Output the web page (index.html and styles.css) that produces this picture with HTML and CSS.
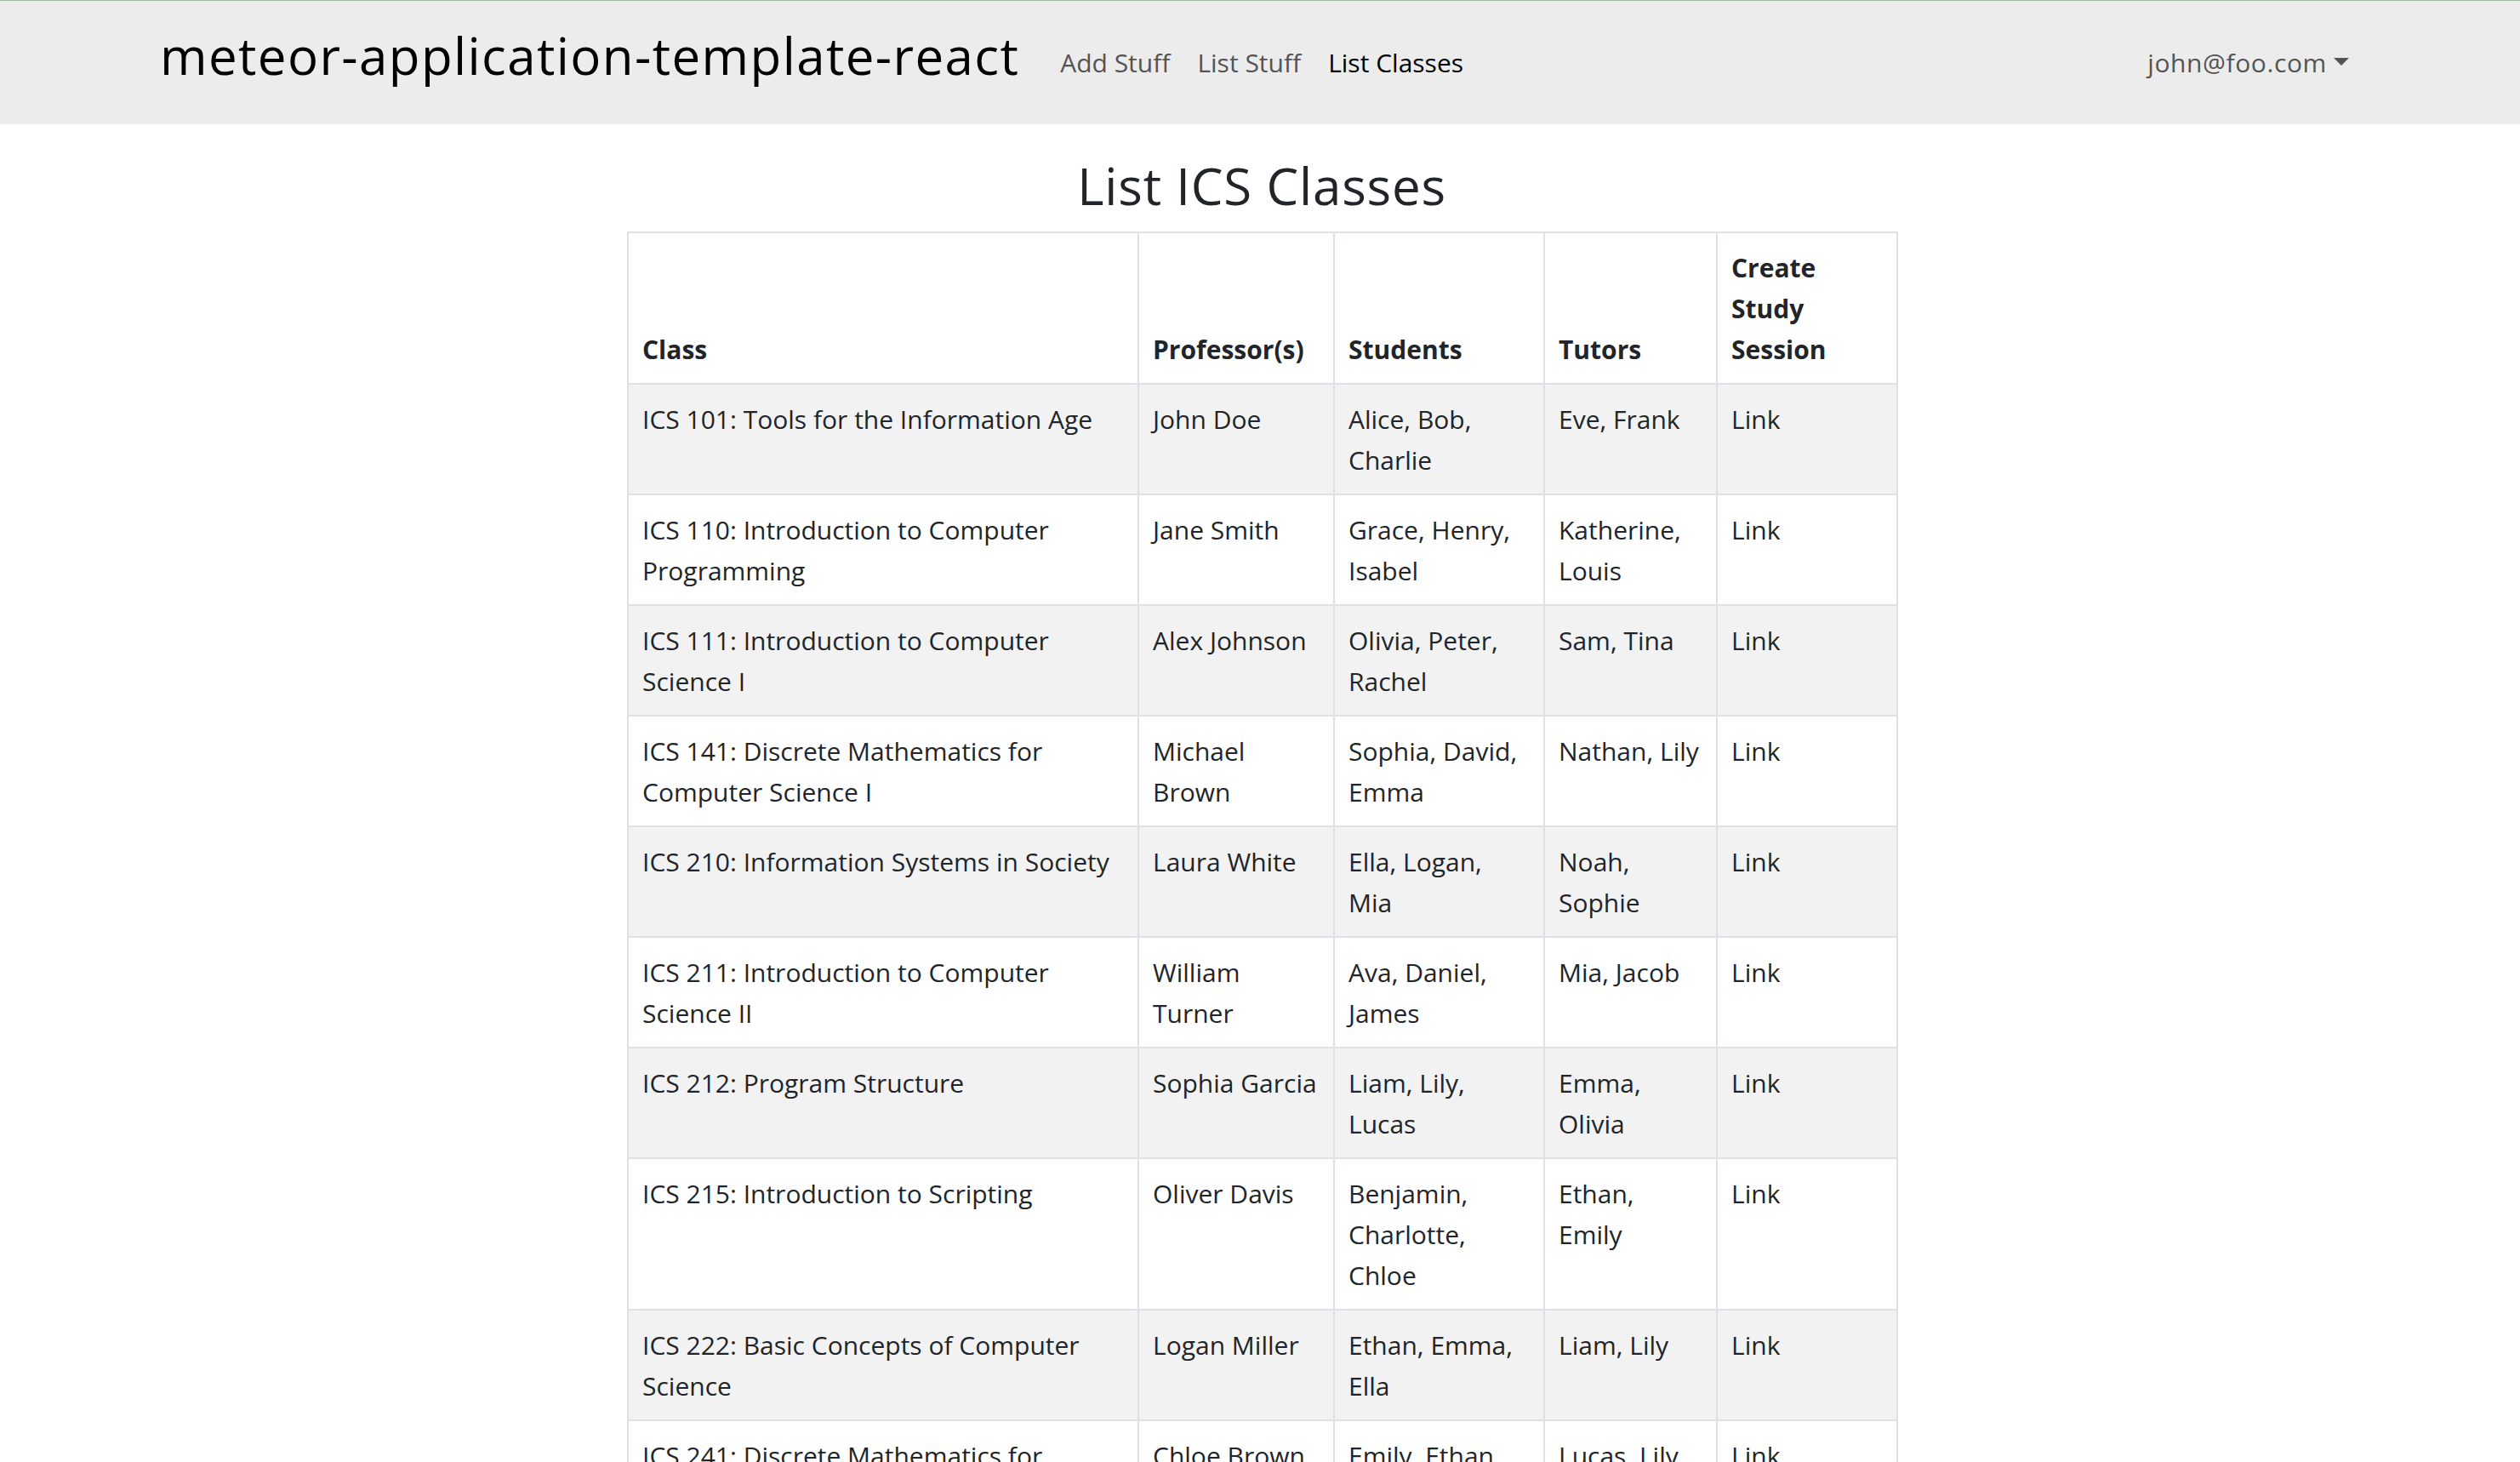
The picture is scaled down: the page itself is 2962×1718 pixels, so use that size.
FILE: index.html
```html
<!DOCTYPE html>
<html lang="en">
<head>
<meta charset="utf-8">
<title>List ICS Classes</title>
<link rel="stylesheet" href="styles.css">
</head>
<body>
<nav class="navbar">
  <div class="nav-container">
    <a class="brand" href="#"><h2 class="brand-title">meteor-application-template-react</h2></a>
    <div class="nav-links">
      <a class="nav-link" href="#">Add Stuff</a>
      <a class="nav-link" href="#">List Stuff</a>
      <a class="nav-link active" href="#">List Classes</a>
    </div>
    <div class="nav-right">
      <a class="nav-link user" href="#">john@foo.com<span class="caret"></span></a>
    </div>
  </div>
</nav>

<main class="page">
  <h2 class="page-title">List ICS Classes</h2>
  <table class="classes">
    <colgroup>
      <col class="c-class">
      <col class="c-prof">
      <col class="c-students">
      <col class="c-tutors">
      <col class="c-link">
    </colgroup>
    <thead>
      <tr>
        <th>Class</th>
        <th>Professor(s)</th>
        <th>Students</th>
        <th>Tutors</th>
        <th>Create Study Session</th>
      </tr>
    </thead>
    <tbody>
      <tr><td>ICS 101: Tools for the Information Age</td><td>John Doe</td><td>Alice, Bob, Charlie</td><td>Eve, Frank</td><td><a href="#">Link</a></td></tr>
      <tr><td>ICS 110: Introduction to Computer Programming</td><td>Jane Smith</td><td>Grace, Henry, Isabel</td><td>Katherine, Louis</td><td><a href="#">Link</a></td></tr>
      <tr><td>ICS 111: Introduction to Computer Science I</td><td>Alex Johnson</td><td>Olivia, Peter, Rachel</td><td>Sam, Tina</td><td><a href="#">Link</a></td></tr>
      <tr><td>ICS 141: Discrete Mathematics for Computer Science I</td><td>Michael Brown</td><td>Sophia, David, Emma</td><td>Nathan, Lily</td><td><a href="#">Link</a></td></tr>
      <tr><td>ICS 210: Information Systems in Society</td><td>Laura White</td><td>Ella, Logan, Mia</td><td>Noah, Sophie</td><td><a href="#">Link</a></td></tr>
      <tr><td>ICS 211: Introduction to Computer Science II</td><td>William Turner</td><td>Ava, Daniel, James</td><td>Mia, Jacob</td><td><a href="#">Link</a></td></tr>
      <tr><td>ICS 212: Program Structure</td><td>Sophia Garcia</td><td>Liam, Lily, Lucas</td><td>Emma, Olivia</td><td><a href="#">Link</a></td></tr>
      <tr><td>ICS 215: Introduction to Scripting</td><td>Oliver Davis</td><td>Benjamin, Charlotte, Chloe</td><td>Ethan, Emily</td><td><a href="#">Link</a></td></tr>
      <tr><td>ICS 222: Basic Concepts of Computer Science</td><td>Logan Miller</td><td>Ethan, Emma, Ella</td><td>Liam, Lily</td><td><a href="#">Link</a></td></tr>
      <tr><td>ICS 241: Discrete Mathematics for Computer Science II</td><td>Chloe Brown</td><td>Emily, Ethan, Grace</td><td>Lucas, Lily</td><td><a href="#">Link</a></td></tr>
      <tr><td>ICS 311: Algorithms</td><td>Daniel Lee</td><td>Henry, Isabel, Jack</td><td>Mia, Noah</td><td><a href="#">Link</a></td></tr>
    </tbody>
  </table>
</main>
</body>
</html>
```
FILE: styles.css
```css
html, body {
  margin: 0;
  padding: 0;
}

body {
  font-family: "Open Sans", "Noto Sans", sans-serif;
  font-size: 30px;
  line-height: 48px;
  color: #212529;
  background: #ffffff;
}

a {
  text-decoration: none;
}

/* ---------- navbar ---------- */
.navbar {
  background: #ececec;
  border-top: 1px solid #9fba9c;
  padding: 16px 0;
}

.nav-container {
  box-sizing: border-box;
  width: 2640px;
  margin: 0 auto;
  padding: 0 24px;
  display: flex;
  align-items: center;
}

.brand {
  display: block;
  padding: 10px 0 10px 3px;
  margin-right: 32px;
  color: #000;
}

.brand-title {
  margin: 0 0 16px;
  font-size: 60px;
  line-height: 76.8px;
  font-weight: 400;
  letter-spacing: 1.4px;
  color: #000;
}

.nav-links {
  display: flex;
  align-items: center;
}

.nav-link {
  display: block;
  padding: 17px 16px 15px;
  line-height: 48px;
  color: #545454;
}

.nav-link.active {
  color: #000;
}

.nav-right {
  margin-left: auto;
}

.user {
  letter-spacing: 0.6px;
}

.caret {
  display: inline-block;
  margin-left: 8px;
  vertical-align: 8px;
  width: 0;
  height: 0;
  border-top: 9.6px solid #545454;
  border-left: 9px solid transparent;
  border-right: 9px solid transparent;
}

/* ---------- page ---------- */
.page {
  box-sizing: border-box;
  width: 1496px;
  margin: 0 auto;
  padding: 34px 0 0 4px;
}

.page-title {
  margin: 0 0 15px;
  text-align: center;
  font-size: 60px;
  line-height: 76.8px;
  font-weight: 400;
  letter-spacing: 0.8px;
  color: #212529;
}

/* ---------- table ---------- */
.classes {
  width: 1492px;
  table-layout: fixed;
  border-collapse: collapse;
  color: #212529;
}

.c-class { width: 600px; }
.c-prof { width: 230px; }
.c-students { width: 247px; }
.c-tutors { width: 203px; }
.c-link { width: 212px; }

.classes th,
.classes td {
  border: 2px solid #dee2e6;
  padding: 17px 16px 15px;
  text-align: left;
}

.classes thead th {
  vertical-align: bottom;
  font-weight: 700;
  background: #ffffff;
}

.classes tbody td {
  vertical-align: top;
}

.classes tbody tr:nth-child(odd) td {
  background: #f2f2f2;
}

.classes a {
  color: #212529;
}
```
